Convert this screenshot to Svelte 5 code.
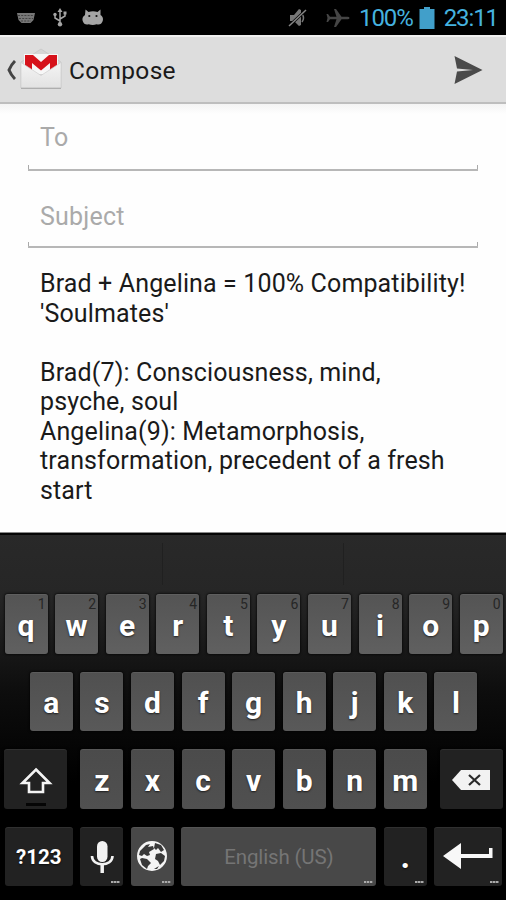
<script>
  const TOP_ROW = ['q', 'w', 'e', 'r', 't', 'y', 'u', 'i', 'o', 'p']
  const HOME_ROW = ['a', 's', 'd', 'f', 'g', 'h', 'j', 'k', 'l']
  const BOTTOM_ROW = ['z', 'x', 'c', 'v', 'b', 'n', 'm']

  const LINES = [
    "Brad + Angelina = 100% Compatibility!",
    "'Soulmates'",
    "",
    "Brad(7): Consciousness, mind,",
    "psyche, soul",
    "Angelina(9): Metamorphosis,",
    "transformation, precedent of a fresh",
    "start"
  ]
</script>

<main class="phone">
  <div class="status">
    <div class="status-left">
      <svg width="18" height="12" viewBox="0 0 18 12">
        <path d="M0 1h18l-1.5 7-3 3h-9l-3-3z" fill="#777" />
        <path d="M1 3.5h16M2 6.5h14M4 9h10" stroke="#444" stroke-width="1" stroke-dasharray="2 1.2" />
      </svg>
      <svg class="usb" width="14" height="19" viewBox="0 0 14 19" fill="none" stroke="#a5a5a5" stroke-width="1.5">
        <path d="M7 3v13M7 13L2 10V7M7 11l5-3V5" />
        <path d="M7 0l2.5 4h-5z" fill="#a5a5a5" stroke="none" />
        <circle cx="7" cy="16.3" r="2.2" fill="#a5a5a5" stroke="none" />
        <circle cx="2" cy="6.5" r="1.7" fill="#a5a5a5" stroke="none" />
        <path d="M10.5 3.5h3v3h-3z" fill="#a5a5a5" stroke="none" />
      </svg>
      <svg width="22" height="17" viewBox="0 0 22 17">
        <path d="M3.500 .5l3 2.500c3-1 6-1 9 0l3-2.500v5.500c2 1.500 3 3 2.200 6-1 3-3 4-6 3.300-3 1-5 1-8 0-3 .7-5-.3-6-3.300-.8-3 .3-4.500 2.300-6z" fill="#a5a5a5" />
        <circle cx="7.3" cy="7" r="1.1" fill="#111" />
        <circle cx="14.5" cy="7" r="1.1" fill="#111" />
      </svg>
    </div>
    <div class="status-right">
      <svg class="mute" width="19" height="20" viewBox="0 0 19 20">
        <path d="M2 7h4l5-6 2 1v15l-2 1-5-5H2z" fill="#777" />
        <path d="M14 6q3 4 0 8" stroke="#777" stroke-width="1.5" fill="none" />
        <path d="M1 18L18 2" stroke="#000" stroke-width="3" />
        <path d="M1 18L18 2" stroke="#858585" stroke-width="1.5" />
      </svg>
      <svg class="plane" width="24" height="20" viewBox="0 0 24 20">
        <path d="M23.500 10q0 1.300-2 1.300h-6L10 19H8l2.500-7.700H4L2 14H.5l1-4-1-4H2l2 2.700h6.500L8 1h2l5.500 7.700h6q2 0 2 1.300z" fill="#454545" />
      </svg>
      <span class="percent">100%</span>
      <svg class="battery" width="16" height="22" viewBox="0 0 16 22">
        <path d="M5 0h6v2h4.500v20H.5V2H5z" fill="#419fca" />
      </svg>
      <span class="clock">23:11</span>
    </div>
  </div>

  <header class="bar">
    <svg class="back" width="10" height="20" viewBox="0 0 10 20">
      <path d="M9 1Q5 5 3 10q2 5 6 9" fill="none" stroke="#444" stroke-width="3" />
    </svg>
    <svg class="gmail" width="44" height="44" viewBox="0 0 44 44">
      <defs>
        <linearGradient id="paper" x1="0" y1="0" x2="0" y2="1">
          <stop offset="0" stop-color="#f4f4f4" />
          <stop offset="1" stop-color="#e2e2e2" />
        </linearGradient>
      </defs>
      <path d="M2 15L22 2l20 13v26H2z" fill="#d6d6d6" stroke="#c4c4c4" stroke-width=".7" />
      <path d="M5 7h34v20H5z" fill="#f7f7f7" />
      <path d="M6 8h8l8 7 8-7h8v15h-7v-7l-9 7.500-9-7.500v7H6z" fill="#d6121b" />
      <path d="M2 15.500l20 13 20-13V41H2z" fill="url(#paper)" stroke="#cecece" stroke-width=".7" />
      <path d="M2 41.300h40" stroke="#a5a5a5" />
    </svg>
    <h1>Compose</h1>
    <svg class="send" width="30" height="28" viewBox="0 0 30 28">
      <path d="M1.500 0l28 14-28 14L4 15.500l16-1.500-16-1.500z" fill="#4a4a4a" />
    </svg>
  </header>

  <section class="form">
    <div class="field to">To</div>
    <div class="field subject">Subject</div>
    <div class="message">
      {#each LINES as line}
        <p>{line}</p>
      {/each}
    </div>
  </section>

  <section class="keyboard">
    <div class="suggestions">
      <span></span><span></span><span></span>
    </div>

    <div class="row">
      {#each TOP_ROW as letter, i}
        <div class="key">{letter}<small>{(i + 1) % 10}</small></div>
      {/each}
    </div>

    <div class="row">
      {#each HOME_ROW as letter}
        <div class="key">{letter}</div>
      {/each}
    </div>

    <div class="row spread">
      <div class="key dark side shift">
        <svg width="34" height="27" viewBox="0 0 34 27">
          <path d="M17 2.500L30.500 16H24v9H10v-9H3.500z" fill="none" stroke="#f4f4f4" stroke-width="2.600" />
        </svg>
        <i></i>
      </div>
      <div class="letters">
        {#each BOTTOM_ROW as letter}
          <div class="key">{letter}</div>
        {/each}
      </div>
      <div class="key dark side">
        <svg class="delete" width="38" height="20" viewBox="0 0 38 20">
          <path d="M0 10L9 0h29v20H9z" fill="#f2f2f2" />
          <path d="M17 5l11 10M28 5L17 15" stroke="#2a2a2a" stroke-width="2.200" />
        </svg>
      </div>
    </div>

    <div class="row">
      <div class="key dark wide symbols">?123</div>
      <div class="key dark more">
        <svg width="24" height="33" viewBox="0 0 24 33">
          <rect x="7" y="0" width="10.500" height="21" rx="5.200" fill="#f2f2f2" />
          <path d="M2 15c0 11 20.500 11 20.500 0" fill="none" stroke="#f2f2f2" stroke-width="2.600" />
          <path d="M12.200 23v9" stroke="#f2f2f2" stroke-width="3.500" />
        </svg>
      </div>
      <div class="key more globe">
        <svg width="32" height="32" viewBox="0 0 32 32">
          <circle cx="16" cy="16" r="14" fill="#f4f4f4" stroke="#f4f4f4" stroke-width="2" />
          <path d="M4 11l6-6 4-1-2 3 5-1 1 3-5 3 1 3-3 1-3-2-2 2-3-1z" fill="#393939" />
          <path d="M19 3l6 2 3 5-3 2-3-4-2 2-2-2z" fill="#393939" />
          <path d="M20 14l5-1 4 3-1 5-4 4-2-4-3-2z" fill="#393939" />
          <path d="M6 18l5 1 4 4-3 3-1 3-5-4-2-6z" fill="#393939" />
          <path d="M18 29l5-3-2 3z" fill="#393939" />
        </svg>
      </div>
      <div class="key space more">English (US)</div>
      <div class="key dark more dot">.</div>
      <div class="key dark wide more enter">
        <svg width="50" height="28" viewBox="0 0 50 28">
          <path d="M0 13L18 0v11h28V5h3.500v10H18v11z" fill="#f8f8f8" />
        </svg>
      </div>
    </div>
  </section>
</main>

<style>
:global(body) {
  background: #000;
}

.phone {
  width: 506px;
  height: 900px;
  overflow: hidden;
  display: flex;
  flex-direction: column;
  font-family: Roboto, sans-serif;
  background: #fefefe;
}

.status {
  height: 35px;
  flex: none;
  display: flex;
  justify-content: space-between;
  background: #000;
  color: #45b2df;
}

.status-left {
  display: flex;
  align-items: center;
  gap: 17px;
  padding-left: 17px;
}

.usb {
  margin-left: 1px;
  margin-right: -2px;
}

.status-right {
  display: flex;
  align-items: center;
  padding-right: 8px;
  font-size: 24px;
  line-height: 35px;
  letter-spacing: -1.100px;
}

.status-right span {
  padding-top: 2px;
}

.plane {
  margin: 0 9px 0 19px;
}

.battery {
  margin: 0 9px 0 6px;
}

.bar {
  height: 69px;
  flex: none;
  box-sizing: border-box;
  display: flex;
  align-items: center;
  padding: 0 23px 0 6px;
  background: #ddd;
  border-top: 2px solid #f0f0f0;
  border-bottom: 2px solid #bebebe;
}

.gmail {
  margin: -1px 6px 0 3px;
}

.bar h1 {
  flex: 1;
  margin: 0;
  padding-top: 2px;
  font-size: 24.500px;
  font-weight: 400;
  letter-spacing: .3px;
  color: #1a1a1a;
}

.form {
  flex: 1;
  padding: 0 28px;
  background: linear-gradient(#f4f4f4, #fefefe 10px);
}

.field {
  box-sizing: border-box;
  padding-left: 12px;
  font-size: 25px;
  letter-spacing: .2px;
  color: #aaa;
  border-bottom: 2px solid #b7b7b7;
  background: linear-gradient(#aaa, #aaa) left bottom / 1px 4px no-repeat,
    linear-gradient(#aaa, #aaa) right bottom / 1px 4px no-repeat;
}

.to {
  height: 67px;
  line-height: 68px;
}

.subject {
  height: 77px;
  line-height: 91px;
}

.message {
  padding: 21px 0 0 12px;
  font-size: 25px;
  line-height: 29.5px;
  letter-spacing: .13px;
  color: #1a1a1a;
}

.message p {
  height: 29.5px;
  margin: 0;
  white-space: nowrap;
}

.keyboard {
  height: 368px;
  flex: none;
  box-sizing: border-box;
  border-top: 1px solid #888;
  background: linear-gradient(#292929, #262626 60px, #0d0d0d 160px, #000 250px);
}

.suggestions {
  height: 52px;
  display: flex;
  padding-top: 8px;
  box-sizing: border-box;
  border-top: 2px solid #050505;
}

.suggestions span {
  height: 42px;
  width: 162px;
  border-right: 1px solid #202020;
}

.suggestions span:nth-child(2) {
  width: 180px;
}

.suggestions span:last-child {
  border: none;
}

.row {
  display: flex;
  justify-content: center;
  height: 77.5px;
  align-items: center;
}

.letters {
  display: flex;
}

.spread {
  justify-content: space-between;
}

.key {
  position: relative;
  box-sizing: border-box;
  width: 43px;
  height: 59.5px;
  margin: 0 3.200px 0 4.400px;
  flex: none;
  display: flex;
  justify-content: center;
  align-items: center;
  padding-top: 3px;
  border-radius: 3px;
  background: linear-gradient(#545454, #606060);
  box-shadow: 0 0 2px 1px #0008, inset 0 1px #fff1;
  color: #fff;
  font-size: 30px;
  font-weight: 700;
  text-shadow: 0 1px 2px #000a;
}

.row:nth-child(3) .key {
  background: linear-gradient(#505050, #595959);
}

.letters .key {
  background: linear-gradient(#4b4b4b, #505050);
}

.row .dark.key {
  background: #222;
}

.key small {
  position: absolute;
  top: 2px;
  right: 2px;
  font-size: 14px;
  font-weight: 400;
  color: #262626;
  text-shadow: none;
}

.side {
  width: 63px;
}

.wide {
  width: 68px;
}

.shift i {
  position: absolute;
  left: 22px;
  bottom: 3px;
  width: 20px;
  height: 3px;
  background: #050505;
}

.more::after {
  content: '';
  position: absolute;
  right: 3px;
  bottom: 3px;
  width: 9px;
  height: 2px;
  background: repeating-linear-gradient(90deg, #aaa 0 2px, #666 2px 3px);
}

.row .symbols {
  padding-top: 2px;
  font-size: 20.500px;
}

.row .globe {
  padding-top: 0;
  background: #484848;
}

.row .enter {
  padding-top: 1px;
}

.row .dot {
  padding-top: 0;
  font-size: 33px;
}

.space {
  width: 194.800px;
  background: #484848;
  color: #757575;
  font-size: 20.500px;
  font-weight: 400;
  letter-spacing: -.15px;
  padding-top: 1px;
  text-shadow: none;
}
</style>
